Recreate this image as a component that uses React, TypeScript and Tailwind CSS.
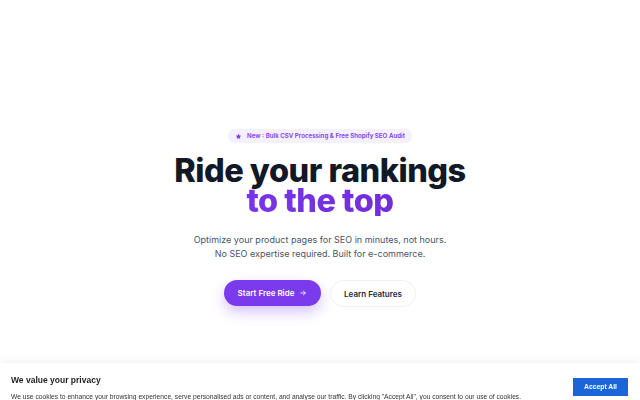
import React from "react";

function Star() {
  return (
    <svg width="7" height="7" viewBox="0 0 24 24" fill="#7c3aed">
      <path d="M12 2.5l2.9 6.1 6.6.8-4.9 4.6 1.3 6.6L12 17.3l-5.9 3.3 1.3-6.6-4.9-4.6 6.6-.8z" />
    </svg>
  );
}

export default function App() {
  return (
    <div className="relative h-[400px] w-[640px] overflow-hidden bg-white" style={{ fontFamily: "Inter, 'Noto Sans', sans-serif" }}>
      <main className="flex flex-col items-center pt-[129px]">
        <div className="flex h-[14px] items-center gap-[5px] rounded-full bg-[#f4f0fe] px-[7px] text-[6.2px] font-semibold text-[#7c3aed]">
          <Star />
          <span>New : Bulk CSV Processing &amp; Free Shopify SEO Audit</span>
        </div>
        <h1 className="mt-[13px] text-center text-[32.5px] font-extrabold leading-[30px] tracking-[-0.5px] text-[#111827]">
          <span className="block">Ride your rankings</span>
          <span className="block bg-gradient-to-r from-[#7c3aed] to-[#6d28d9] bg-clip-text text-transparent">to the top</span>
        </h1>
        <p className="mt-[17px] text-center text-[9px] leading-[14px] text-[#4b5563]">
          Optimize your product pages for SEO in minutes, not hours.
          <br />
          No SEO expertise required. Built for e-commerce.
        </p>
        <div className="mt-[19px] flex gap-[9px]">
          <button className="flex h-[26px] w-[97px] items-center justify-center gap-[5px] rounded-full bg-[#7c3aed] text-[8px] font-semibold text-white shadow-[0_6px_14px_rgba(124,58,237,0.3)]">
            Start Free Ride
            <svg width="8" height="8" viewBox="0 0 24 24" fill="none" stroke="white" strokeWidth="2.5" strokeLinecap="round" strokeLinejoin="round">
              <path d="M5 12h14M13 6l6 6-6 6" />
            </svg>
          </button>
          <button className="flex h-[27px] w-[86px] items-center justify-center rounded-full border border-[#eef0f3] bg-white text-[8px] font-semibold text-[#1f2937]">
            Learn Features
          </button>
        </div>
      </main>

      <div
        className="fixed left-0 right-0 top-[363px] h-[60px] bg-white shadow-[0_-2px_8px_rgba(0,0,0,0.06)]"
        style={{ fontFamily: "'Liberation Sans', Arial, sans-serif" }}
      >
        <div className="flex items-start justify-between pl-[11px] pr-[12px] pt-[12px]">
          <div>
            <div className="text-[8.5px] font-bold leading-[10px] text-[#1f1f1f]">We value your privacy</div>
            <div className="mt-[8px] text-[6.7px] leading-[8px] text-[#333]">
              We use cookies to enhance your browsing experience, serve personalised ads or content, and analyse our traffic. By clicking "Accept All", you consent to our use of cookies.
            </div>
          </div>
          <button className="mt-[3px] flex h-[18px] w-[55px] items-center justify-center bg-[#1a66d9] text-[6.8px] font-bold text-white">
            Accept All
          </button>
        </div>
      </div>
    </div>
  );
}
